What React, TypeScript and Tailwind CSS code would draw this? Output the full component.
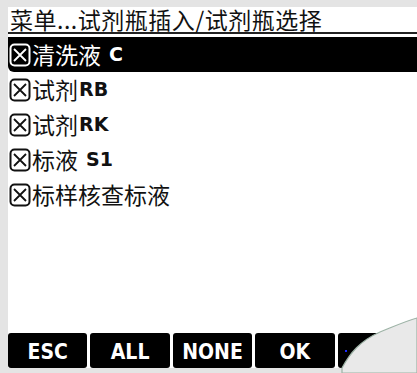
import React from "react";

const cjk = { fontFamily: '"Noto Sans CJK SC", "Noto Sans", sans-serif' };
const latin = { fontFamily: '"DejaVu Sans", "Liberation Sans", sans-serif' };
const btnFont = { fontFamily: '"DejaVu Sans Condensed", "DejaVu Sans", sans-serif' };

function CheckBox({ light }: { light?: boolean }) {
	const c = light ? "#ffffff" : "#111111";
	return (
		<svg width="22" height="24" viewBox="0 0 22 24" className="shrink-0">
			<rect x="1.5" y="1.5" width="19" height="21" rx="4" fill="none" stroke={c} strokeWidth="2" />
			<path d="M5 6 L17 18 M17 6 L5 18" stroke={c} strokeWidth="1.8" />
		</svg>
	);
}

function Row({
	label,
	code,
	selected,
	spaced,
}: {
	label: string;
	code?: string;
	selected?: boolean;
	spaced?: boolean;
}) {
	return (
		<div
			className={
				selected
					? "h-[35px] flex items-center gap-[1px] pl-[1px] bg-black text-white rounded-bl-md"
					: "h-[35px] flex items-center gap-[1px] pl-[1px] text-[#111]"
			}
		>
			<CheckBox light={selected} />
			<span className="text-[23px] leading-none" style={cjk}>
				{label}
			</span>
			{code && (
				<span
					className={spaced ? "text-[19px] font-bold leading-none ml-[7px]" : "text-[19px] font-bold leading-none"}
					style={latin}
				>
					{code}
				</span>
			)}
		</div>
	);
}

export default function App() {
	const items = [
		{ label: "试剂", code: "RB" },
		{ label: "试剂", code: "RK" },
		{ label: "标液", code: "S1", spaced: true },
		{ label: "标样核查标液" },
	];
	const buttons = ["ESC", "ALL", "NONE", "OK", ""];

	return (
		<div className="w-[417px] h-[373px] bg-[#e4e4e4] relative overflow-hidden pt-[7px] pl-[8px] pb-[5px]">
			<div className="bg-white h-full flex flex-col">
				{/* Title */}
				<div className="h-[27px] border-b-2 border-[#222] flex items-end pl-[2px]">
					<span className="text-[23px] leading-[25px] text-[#111] tracking-[0.5px]" style={cjk}>
						菜单...试剂瓶插入/试剂瓶选择
					</span>
				</div>
				<div className="h-[3px]" />
				<Row label="清洗液" code="C" selected spaced />
				{items.map((it, i) => (
					<Row key={i} label={it.label} code={it.code} spaced={it.spaced} />
				))}
				<div className="flex-1" />

				{/* Softkeys */}
				<div className="flex gap-[3px] h-[35px]">
					{buttons.map((b, i) => (
						<div
							key={i}
							className="flex-1 bg-black rounded-[3px] flex items-center justify-center pt-[3px]"
						>
							<span className="text-white font-bold text-[21px] leading-none" style={btnFont}>
								{b}
							</span>
						</div>
					))}
				</div>
			</div>

			{/* page curl over the bottom-right corner */}
			<svg className="absolute left-0 top-0" width="417" height="373" viewBox="0 0 417 373">
				<path
					d="M342 373 L342 368 C350 353 360 341 380 332 C395 326 406 321 417 318 L417 373 Z"
					fill="#e9e9e9"
					stroke="#9db3a6"
					strokeWidth="1.2"
				/>
				<rect x="345" y="350" width="2" height="2" fill="#1a2bff" />
			</svg>
		</div>
	);
}
